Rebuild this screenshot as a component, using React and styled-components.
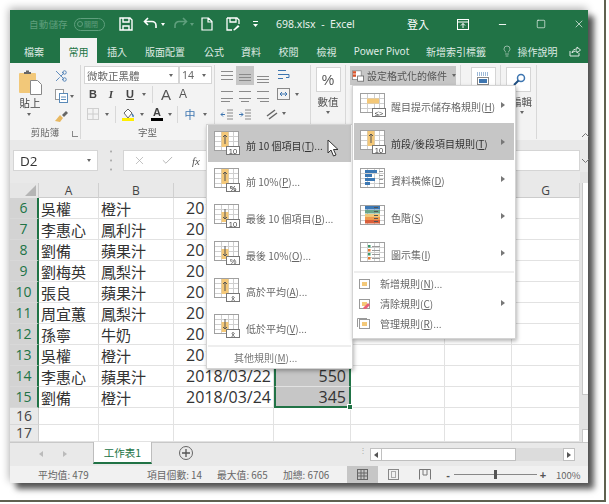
import React from "react";
import styled, { createGlobalStyle } from "styled-components";
import { Scissors, Lightbulb, X, Check, Minus, Square } from "lucide-react";

const GREEN = "#217346";
const HILITE = "#c6c6c6";
const CJK = `"Noto Sans CJK TC", "Noto Sans", sans-serif`;

const Global = createGlobalStyle`
  html, body { margin: 0; padding: 0; background: #fff; }
  * { box-sizing: border-box; }
  #root { width: 609px; height: 504px; overflow: hidden; font-family: ${CJK}; }
`;

const Frame = styled.div`
  width: 606px; height: 502px; padding: 10px 16px 16px 10px; background: #fff;
  border-right: 2px solid #5f6150; border-bottom: 2px solid #5f6150;
`;
const Win = styled.div`
  position: relative; width: 578px; height: 473px; display: flex; flex-direction: column;
  background: #f3f3f3; filter: blur(0.35px);
  box-shadow: 6px 6px 6px rgba(0,0,0,.65), -1px -2px 8px rgba(0,0,0,.3);
`;

/* title bar */
const TitleBar = styled.div`
  height: 28px; background: ${GREEN}; display: flex; align-items: center; color: #fff; font-size: 11px;
  padding-left: 19px; flex: none;
`;
const Slot = styled.div`
  flex: none; width: ${p => p.$w}px; margin-left: ${p => p.$ml || 0}px; display: flex; align-items: center;
  justify-content: center; gap: 2px; color: ${p => p.$c || "inherit"};
`;
const AutoSave = styled.span`color: #5f9f7d; font-size: 9.5px; letter-spacing: .2px; width: 45px;`;
const Toggle = styled.span`
  width: 31px; height: 13px; border: 1px solid #5f9f7d; border-radius: 7px; color: #5f9f7d; font-size: 7px;
  display: flex; align-items: center; gap: 1px; padding-left: 2px; margin-right: 8px; flex: none;
`;
const Knob = styled.i`width: 6px; height: 6px; border: 1px solid #5f9f7d; border-radius: 50%;`;
const TitleText = styled.span`width: 122px; margin-left: 15px; font-family: "Noto Sans", sans-serif; font-size: 10.5px; white-space: pre; flex: none; color: #e8f1ec;`;

/* tabs */
const TabRow = styled.div`height: 25px; background: ${GREEN}; display: flex; flex: none; color: #dfeae4; font-size: 10px;`;
const Tab = styled.div`
  flex: none; width: ${p => p.$w}px; margin-left: ${p => p.$ml || 0}px; display: flex; align-items: center; justify-content: center; gap: 5px;
  padding-top: 1px;
  background: ${p => p.$on ? "#f3f3f3" : "transparent"}; color: ${p => p.$on ? GREEN : "inherit"};
`;

/* ribbon */
const Ribbon = styled.div`height: 77px; flex: none; display: flex; background: #f3f3f3; position: relative; font-size: 10px; color: #555;`;
const Group = styled.div`
  flex: none; width: ${p => p.$w}px; padding: 1px 0 0 ${p => p.$pl || 0}px; height: 74px; margin-top: 2px; border-right: 1px solid #d8d8d8;
  display: flex; flex-direction: ${p => p.$row ? "row" : "column"}; align-items: ${p => p.$center ? "center" : "stretch"}; position: relative;
`;
const GroupLabel = styled.div`
  position: absolute; left: 0; right: 0; bottom: 0; text-align: center; font-size: 9.5px; color: #666; line-height: 13px;
`;
const Launcher = styled.span`position: absolute; right: 2px; bottom: 2px; width: 6px; height: 6px; border-left: 1px solid #888; border-bottom: 1px solid #888;`;
const PasteCol = styled.div`width: 42px; padding: 4px 0 0 8px; display: flex; flex-direction: column; align-items: flex-start; flex: none;`;
const PasteLabel = styled.span`font-size: 10.5px; color: #444; width: 24px; text-align: center; line-height: 12px; margin-top: 2px;`;
const ToolsCol = styled.div`display: flex; flex-direction: column;`;
const ToolRow = styled.div`display: flex; align-items: center; height: ${p => p.$h || 19}px; padding-left: ${p => p.$pl || 0}px; flex: none;`;
const Tool = styled.div`
  flex: none; width: ${p => p.$w || 18}px; height: ${p => p.$h || 19}px; margin-left: ${p => p.$ml || 0}px; display: flex; align-items: center; justify-content: center; gap: 3px;
  background: ${p => p.$on ? HILITE : "transparent"};
  font: ${p => p.$font || `bold 11px "Liberation Sans", sans-serif`}; color: ${p => p.$c || "#444"};
`;
const Caret = styled.i`
  flex: none; width: 0; height: 0; border-left: 2.5px solid transparent; border-right: 2.5px solid transparent; border-top: 3px solid #666;
`;
const Sep = styled.i`flex: none; width: 1px; height: 17px; background: #d8d8d8; margin: 0 ${p => p.$m || 4}px;`;
const Select = styled.div`
  flex: none; width: ${p => p.$w}px; height: 18px; background: #fff; border: 1px solid #d5d5d5; padding: 0 5px 0 2px; display: flex; align-items: center;
  justify-content: space-between; font-size: 10.5px; color: #666; margin-left: ${p => p.$ml || 0}px; white-space: nowrap;
`;
const BigBtn = styled.div`
  width: 25px; height: 25px; margin-top: 1px; border: 1px solid #d5d5d5; background: #fff; display: flex; align-items: center; justify-content: center; flex: none;
  font: 14px "Liberation Sans", sans-serif; color: #555;
`;
const BigLabel = styled.span`font-size: 10.5px; color: #555; margin-top: 3px; line-height: 14px;`;
const StylesBtn = styled.div`
  width: 106px; height: 19px; margin-left: 4px; background: ${HILITE}; display: flex; align-items: center; gap: 3px; padding-left: 2px; font-size: 10px; color: #555; white-space: nowrap;
`;
const Collapse = styled.div`position: absolute; right: -2px; bottom: 2px; color: #666; font-size: 0;`;

/* formula */
const FormulaBar = styled.div`height: 32px; flex: none; display: flex; padding: 10px 0 1px 3px; background: #e9e9e9; position: relative;`;
const NameBox = styled.div`
  width: 85px; height: 21px; background: #fff; border: 1px solid #d5d5d5; display: flex; align-items: center; justify-content: space-between;
  padding: 0 6px; font: 13.5px "Open Sans", sans-serif; color: #333; flex: none;
`;
const Dots = styled.div`
  width: 25px; flex: none; display: flex; align-items: center; justify-content: center; color: #aaa; font-size: 9px; line-height: 4px; writing-mode: vertical-rl;
`;
const FormulaInput = styled.div`flex: none; width: 457px; height: 21px; background: #fff; border: 1px solid #d5d5d5; display: flex; align-items: center; padding-left: 9px; gap: 15px; color: #aaa;`;
const Fx = styled.i`font: italic 11px "Liberation Serif", serif; color: #555; margin-left: 3px;`;

/* sheet */
const Sheet = styled.div`height: 270px; flex: none; display: flex; background: #e9e9e9;`;
const GridWrap = styled.div`width: 570px; padding-top: 11px; flex: none;`;
const Grid = styled.div`
  display: grid; grid-template-columns: 29px 60px 75px 100px 77px 94px 67px 68px;
  grid-template-rows: 15px repeat(10, 21px) 17px 17px; background: #fff;
  font: 16px "Open Sans", sans-serif; color: #333;
`;
const Corner = styled.div`
  background: #e6e6e6; border-right: 1px solid #ccc; position: relative; overflow: hidden;
  &::after { content: ""; position: absolute; right: 2px; bottom: 2px; border-left: 11px solid transparent; border-bottom: 11px solid #b5b5b5; }
`;
const ColHead = styled.div`
  background: ${p => p.$sel ? "#cfcfcf" : "#e9e9e9"}; border-right: 1px solid #d0d0d0; border-bottom: 1px solid #ccc; display: flex; align-items: center; justify-content: center;
  font-size: 12px; color: #444;
`;
const RowHead = styled.div`
  background: ${p => p.$sel ? "#d3d3d3" : "#e9e9e9"}; color: ${p => p.$sel ? GREEN : "#444"};
  border-right: ${p => p.$sel ? `2px solid ${GREEN}` : "1px solid #ccc"}; border-bottom: 1px solid #d8d8d8;
  display: flex; align-items: center; justify-content: center; font-size: 14px; line-height: 1;
`;
const Cell = styled.div`
  border-right: 1px solid #e2e2e2; border-bottom: 1px solid #e2e2e2; display: flex; align-items: center; overflow: hidden; white-space: nowrap; padding: 0 2px;
  justify-content: ${p => p.$right ? "flex-end" : "flex-start"};
  font-family: ${p => p.$cjk ? CJK : `"Open Sans", sans-serif`}; font-size: ${p => p.$cjk ? 15 : 16}px;
`;
const ValueCell = styled(Cell)`
  position: relative; background: ${HILITE}; overflow: visible; padding-right: 3px;
  border-left: 2px solid ${GREEN}; border-right: 2px solid ${GREEN}; border-bottom: ${p => p.$last ? `2px solid ${GREEN}` : "1px solid #e2e2e2"};
`;
const Handle = styled.i`position: absolute; right: -4px; bottom: -4px; width: 6px; height: 6px; background: ${GREEN}; border: 1px solid #fff; z-index: 1;`;
const VScroll = styled.div`
  flex: none; width: 8px; display: flex; flex-direction: column; padding-top: 11px; background: #e3e3e3; overflow: hidden;
`;
const VThumb = styled.div`height: 212px; background: #fff; border-left: 1px solid #c8c8c8; margin-left: 2px; flex: none; border-bottom: 1px solid #c8c8c8;`;
const VBtn = styled.div`height: 13px; margin-top: auto; background: #fff; border-left: 1px solid #c8c8c8; border-top: 1px solid #c8c8c8; margin-left: 2px;`;

/* sheet tabs */
const SheetTabs = styled.div`height: 24px; flex: none; display: flex; align-items: flex-start; background: #e9e9e9; padding-left: 19px; border-top: 1px solid #c8c8c8;`;
const Nav = styled.div`flex: none; width: 24px; height: 21px; display: flex; align-items: center; justify-content: center;`;
const Tri = styled.i`
  width: 0; height: 0; border-top: 3px solid transparent; border-bottom: 3px solid transparent;
  ${p => p.$left ? `border-right: 4px solid ${p.$c || "#bbb"};` : `border-left: 4px solid ${p.$c || "#bbb"};`}
`;
const SheetTab = styled.div`
  flex: none; width: 59px; height: 22px; margin-left: 16px; margin-top: -1px; background: #fff; color: ${GREEN}; font-size: 10.5px; display: flex; align-items: center; justify-content: center;
  border-left: 1px solid #bdbdbd; border-right: 1px solid #bdbdbd; border-bottom: 2px solid ${GREEN};
`;
const AddBtn = styled.div`
  flex: none; width: 14px; height: 14px; margin: 3px 0 0 27px; border: 1px solid #666; border-radius: 50%; color: #555; display: flex; align-items: center; justify-content: center;
`;
const SplitDots = styled.div`flex: none; margin: 5px 0 0 163px; width: 14px; height: 12px; color: #aaa; font-size: 8px; line-height: 4px; text-align: center;`;
const HScroll = styled.div`flex: none; width: 205px; height: 13px; margin-top: 5px; display: flex; background: #dcdcdc;`;
const HBtn = styled.div`flex: none; width: 12px; background: #fff; border: 1px solid #c0c0c0; display: flex; align-items: center; justify-content: center; margin-left: ${p => p.$auto ? "auto" : 0};`;
const HThumb = styled.div`flex: none; width: 134px; background: #fff; border: 1px solid #c0c0c0; border-left: 0;`;

/* status */
const Status = styled.div`height: 17px; flex: none; display: flex; align-items: center; background: #f1f1f1; color: #666; font-size: 9.8px; padding-left: 28px; white-space: nowrap;`;
const Stat = styled.span`flex: none; width: ${p => p.$w}px;`;
const ViewBtn = styled.div`flex: none; width: ${p => p.$w || 31}px; height: 17px; display: flex; align-items: center; justify-content: center; background: ${p => p.$on ? HILITE : "transparent"};`;
const Slider = styled.div`flex: none; width: 83px; height: 1px; background: #888; position: relative;`;
const SliderKnob = styled.i`position: absolute; left: 40px; top: -4px; width: 3px; height: 9px; background: #555;`;
const Percent = styled.span`margin-left: 7px; font-size: 9.5px;`;
const Sign = styled.span`flex: none; width: ${p => p.$w}px; margin-left: ${p => p.$ml || 0}px; text-align: center; font: bold 11px "Liberation Sans", sans-serif; color: #555;`;

/* menus */
const Menu = styled.div`
  position: absolute; left: ${p => p.$x}px; top: ${p => p.$y}px; width: ${p => p.$w}px; height: ${p => p.$h}px; background: #fff;
  border: 1px solid #d4d4d4; box-shadow: 1px 2px 4px rgba(0,0,0,.3); padding: 0 1px; z-index: 5; display: flex; flex-direction: column;
  font-size: 10px; color: #666;
`;
const MenuIconBox = styled.span`flex: none; width: ${p => p.$w || 32}px; display: flex; align-items: center;`;
const MenuItem = styled.div`
  height: ${p => p.$h || 37}px; flex: none; display: flex; align-items: center; position: relative; white-space: nowrap;
  background: ${p => p.$on ? HILITE : "transparent"}; color: ${p => p.$on ? "#333" : "#666"};
  padding-left: ${p => p.$pl || 6}px; padding-top: ${p => p.$small ? 0 : 4}px;
  & > ${MenuIconBox} { margin-top: ${p => p.$small ? 0 : -4}px; }
`;
const Sub = styled.span`
  position: absolute; right: 9px; top: 50%; margin-top: -3px; width: 0; height: 0;
  border-top: 3px solid transparent; border-bottom: 3px solid transparent; border-left: 4px solid #777;
`;
const MenuSep = styled.div`height: 2px; background: #eee; flex: none;`;
const More = styled.div`height: 22px; display: flex; align-items: center; padding-left: 26px; flex: none; color: #777;`;
const Cursor = styled.svg`position: absolute; left: 119px; top: 14px;`;
const Key = styled.u``;

/* icon drawings */
const Ic = ({ w = 16, h = 16, vb, children }) => <svg width={w} height={h} viewBox={vb || `0 0 ${w} ${h}`} fill="none">{children}</svg>;

const Lines = ({ kind }) => {
  const rows = { t: [2, 6, 10], m: [5, 8, 11], b: [7, 10, 13] }[kind[0]] || [3, 6.5, 10, 13];
  const a = kind[1];
  return <Ic w={14} h={14}>{rows.map((y, i) => {
    const odd = i % 2 === 1;
    const x1 = a === "c" && odd ? 3 : a === "r" && odd ? 4 : 1;
    const x2 = a === "l" && odd ? 10 : a === "c" && odd ? 11 : 13;
    return <path key={y} d={`M${x1} ${y}.5H${x2}`} stroke="#8a8a8a" />;
  })}</Ic>;
};

const TableBase = ({ children, c = "#a0a0a0" }) => (
  <>
    <rect x=".5" y=".5" width="24" height="19" fill="#fff" stroke={c} />
    {[5, 10, 15].map(y => <path key={y} d={`M1 ${y}.5H24`} stroke="#cfcfcf" />)}
    {[7, 14, 19].map(x => <path key={x} d={`M${x}.5 1V19`} stroke="#cfcfcf" />)}
    {children}
  </>
);
const Badge = ({ children, small }) => (
  <g>
    <rect x="12.5" y="15.5" width="13" height="8" fill="#fff" stroke="#777" />
    <text x="19" y="22.500" textAnchor="middle" fontSize="7.500" fontFamily="Liberation Sans, sans-serif" fontWeight={small ? "bold" : "normal"} fill="#444">{children}</text>
  </g>
);
const Up = () => <><rect x="7.500" y="1" width="7" height="15" fill="#f4c878" /><path d="M11 13V4M9 6l2-2 2 2" stroke="#555" /></>;
const Down = () => <><rect x="7.500" y="8" width="7" height="10" fill="#f4c878" /><path d="M11 5v10M9 13l2 2 2-2" stroke="#555" /></>;
const RuleIcon = ({ dir, badge, small }) => (
  <Ic w={26} h={24}>
    <TableBase>{dir === "u" ? <Up /> : dir === "d" ? <Down /> : <rect x="7" y="5.500" width="12" height="5" fill="#f4c878" />}</TableBase>
    <Badge small={small}>{badge}</Badge>
  </Ic>
);
const BarsIcon = () => (
  <Ic w={26} h={22}>
    <TableBase />
    {[[2, 12], [6, 7], [10, 10], [14, 5]].map(([y, w]) => <rect key={y} x="5" y={y} width={w} height="3" fill="#3c78b4" />)}
    {[3, 7, 11, 15].map(y => <path key={y} d={`M19 ${y}.5H23`} stroke="#999" />)}
  </Ic>
);
const ScaleIcon = () => (
  <Ic w={26} h={22}>
    <TableBase />
    {[["#3c78b4", 1], ["#6aa58a", 5], ["#f0c878", 9], ["#ee9a4d", 12], ["#d95f3a", 15]].map(([c, y]) => <rect key={c} x="5" y={y} width="15" height="3.5" fill={c} />)}
    {[2, 6, 10, 13, 16].map(y => <path key={y} d={`M14 ${y}.5H18`} stroke="#555" />)}
  </Ic>
);
const SetIcon = () => (
  <Ic w={26} h={22}>
    <TableBase />
    {[[3, "#3b9a6b"], [7, "#e8792f"], [11, "#3b9a6b"], [15, "#e8792f"]].map(([y, c]) => <rect key={y} x="8" y={y} width="2.5" height="2.5" fill={c} />)}
    {[4, 8, 12, 16].map(y => <path key={y} d={`M12 ${y}.5H20`} stroke="#999" />)}
  </Ic>
);
const SmallTable = ({ erase, stack }) => (
  <Ic w={14} h={13}>
    {stack && <path d="M.5 10V1.5H10" stroke="#999" />}
    <rect x="2.5" y="2.5" width="10" height="9" fill="#fff" stroke="#999" />
    <rect x="5" y="5" width="5" height="4" fill="#f4c878" />
    {erase && <path d="M6 11l5-5 2 2-4 4H7z" fill="#e8607a" />}
  </Ic>
);
const XBar = "x̄";

const people = [
  ["吳權", "橙汁", "2018/03/03", 423], ["李惠心", "鳳利汁", "2018/03/05", 665], ["劉備", "蘋果汁", "2018/03/08", 390], ["劉梅英", "鳳梨汁", "2018/03/10", 512],
  ["張良", "蘋果汁", "2018/03/12", 468], ["周宜蕙", "鳳梨汁", "2018/03/15", 377], ["孫寧", "牛奶", "2018/03/17", 601], ["吳權", "橙汁", "2018/03/20", 436],
  ["李惠心", "蘋果汁", "2018/03/22", 550], ["劉備", "橙汁", "2018/03/24", 345],
];

export default function App() {
  return (
    <Frame>
      <Global />
      <Win>
        <TitleBar>
          <AutoSave>自動儲存</AutoSave>
          <Toggle><Knob />關閉</Toggle>
          <Slot $w={26}><Ic w={14} h={14}><path d="M1 1h10l2 2v10H1z M4 1v4h6V1 M4 13V9h6v4" stroke="#fff" strokeWidth="1.4" /></Ic></Slot>
          <Slot $w={30}><Ic w={16} h={14}><path d="M5 1L1.5 4.5 5 8M2 4.5h7a4 4 0 0 1 4 4v2.5" stroke="#fff" strokeWidth="1.6" /></Ic><Caret style={{ borderTopColor: "#fff" }} /></Slot>
          <Slot $w={28}><Ic w={16} h={14}><path d="M11 1l3.5 3.5L11 8M14 4.5H7a4 4 0 0 0-4 4v2.5" stroke="#5f9f7d" strokeWidth="1.6" /></Ic><Caret style={{ borderTopColor: "#5f9f7d" }} /></Slot>
          <Slot $w={20}><Ic w={12} h={14}><path d="M1 1h6.5L11 4.5V13H1zM7 1v4h4" stroke="#fff" strokeWidth="1.2" /></Ic></Slot>
          <Slot $w={32}><Ic w={14} h={14}><path d="M1 1h10l2 2v4M6 13H1V1M4 1v4h6V1" stroke="#fff" strokeWidth="1.3" /><path d="M7 13l5-5 1.5 1.5-5 4z" fill="#fff" /></Ic></Slot>
          <Slot $w={12}><Ic w={7} h={8}><path d="M1 1.5h5" stroke="#fff" /><path d="M1 4l2.5 3L6 4z" fill="#fff" /></Ic></Slot>
          <TitleText>698.xlsx  -  Excel</TitleText>
          <Slot $w={40}>登入</Slot>
          <Slot $w={38} $ml={6}><Ic w={12} h={11}><rect x=".5" y=".5" width="11" height="10" stroke="#fff" /><path d="M.5 3h11M6 9V4.5M4 6.5l2-2 2 2" stroke="#fff" /></Ic></Slot>
          <Slot $w={40}><Minus size={11} color="#fff" /></Slot>
          <Slot $w={38}><Square size={10} color="#fff" strokeWidth={1.5} /></Slot>
          <Slot $w={18} $ml={10}><X size={12} color="#fff" strokeWidth={1.3} /></Slot>
        </TitleBar>
        <TabRow>
          <Tab $w={48}>檔案</Tab>
          <Tab $w={37} $ml={2} $on>常用</Tab>
          <Tab $w={40}>插入</Tab>
          <Tab $w={56}>版面配置</Tab>
          <Tab $w={42}>公式</Tab>
          <Tab $w={32}>資料</Tab>
          <Tab $w={43}>校閱</Tab>
          <Tab $w={33}>檢視</Tab>
          <Tab $w={77} style={{ fontFamily: '"Noto Sans", sans-serif' }}>Power Pivot</Tab>
          <Tab $w={72}>新增索引標籤</Tab>
          <Tab $w={74}><Lightbulb size={12} strokeWidth={1.2} />操作說明</Tab>
          <Tab $w={18}><Ic w={12} h={11}><path d="M1 5v5h9V7M3 7c0-3 3-4 5-4V1l3.500 3L8 7V5C6 5 4 5.500 3 7z" stroke="#dfeae4" /></Ic></Tab>
        </TabRow>
        <Ribbon>
          <Group $w={71} $row>
            <PasteCol>
              <Ic w={26} h={25}>
                <rect x="1" y="3" width="17" height="20" rx="1" fill="#f2c879" />
                <path d="M6 4V2h2V.5h3V2h2v2z" fill="#666" />
                <path d="M12.500 10.500h7l4 4v10h-11z" fill="#fff" stroke="#888" />
              </Ic>
              <PasteLabel>貼上</PasteLabel>
              <Caret style={{ margin: "4px 0 0 9px" }} />
            </PasteCol>
            <ToolsCol>
              <Tool $w={18} $h={20}><Scissors size={14} color="#3d75b0" strokeWidth={1.4} style={{ transform: "scaleX(-1)" }} /></Tool>
              <ToolRow $h={20}>
                <Tool $w={18}><Ic w={13} h={14}><rect x=".5" y=".5" width="8" height="10" fill="#fff" stroke="#999" /><rect x="4.500" y="4.500" width="8" height="9" fill="#fff" stroke="#5a8ab8" /><path d="M6 8h5M6 10.500h5" stroke="#5a8ab8" /></Ic></Tool>
                <Caret />
              </ToolRow>
              <Tool $w={18} $h={20}><Ic w={14} h={14}><path d="M1 12l5-6 3 3-3 4z" fill="#e8b860" /><path d="M8 6l4-4 2 2-4 4z" fill="#666" /></Ic></Tool>
            </ToolsCol>
            <GroupLabel>剪貼簿</GroupLabel>
            <Launcher />
          </Group>
          <Group $w={134} $pl={3}>
            <ToolRow $h={18}>
              <Select $w={95}>微軟正黑體<Caret /></Select>
              <Select $w={33}><span style={{ fontFamily: '"Noto Sans"' }}>14</span><Caret /></Select>
            </ToolRow>
            <ToolRow $h={20}>
              <Tool>B</Tool>
              <Tool $font={`italic bold 11px "Liberation Serif", serif`}>I</Tool>
              <Tool $w={20} style={{ textDecoration: "underline" }}>U</Tool>
              <Tool $w={8}><Caret /></Tool>
              <Sep $m={4} />
              <Tool $font={`15px "Liberation Sans", sans-serif`} $c="#555">A</Tool>
              <Tool $w={16} $font={`12px "Liberation Sans", sans-serif`} $c="#555">A</Tool>
            </ToolRow>
            <ToolRow $h={20}>
              <Tool><Ic w={12} h={12}><rect x=".5" y=".5" width="11" height="11" stroke="#aaa" strokeDasharray="1 1" /><path d="M6 1v10M1 6h10" stroke="#ccc" /></Ic></Tool>
              <Tool $w={10}><Caret /></Tool>
              <Sep $m={3} />
              <Tool><Ic w={14} h={14}><path d="M3 6l4-4 4 4-4 5z" stroke="#666" fill="#fff" /><path d="M11 7c1 1 1.500 2 1 3" stroke="#3d75b0" strokeWidth="1.500" /><rect x="1" y="11" width="12" height="3" fill="#ffef00" /></Ic></Tool>
              <Tool $w={10}><Caret /></Tool>
              <Tool $ml={1} $font={`bold 11px "Liberation Sans", sans-serif`} style={{ flexDirection: "column", gap: 0 }}><span style={{ lineHeight: "11px" }}>A</span><i style={{ width: 12, height: 3, background: "#000" }} /></Tool>
              <Tool $w={8}><Caret /></Tool>
              <Sep $m={3} />
              <Tool $font={`11px ${CJK}`} $c="#3d75b0">中</Tool>
              <Tool $w={12}><Caret /></Tool>
            </ToolRow>
            <GroupLabel>字型</GroupLabel>
          </Group>
          <Group $w={96} $pl={3}>
            <ToolRow $h={19}>
              <Tool><Lines kind="t" /></Tool><Tool $on><Lines kind="m" /></Tool><Tool><Lines kind="b" /></Tool>
              <Tool $ml={3}><Ic w={14} h={13}><path d="M1 1.500h8M1 5.500h11v3H9M1 9.500h5" stroke="#3d75b0" /></Ic></Tool>
            </ToolRow>
            <ToolRow>
              <Tool><Lines kind="xl" /></Tool><Tool><Lines kind="xc" /></Tool><Tool><Lines kind="xr" /></Tool>
              <Tool $ml={3}><Ic w={14} h={13}><rect x=".5" y=".5" width="12" height="11" stroke="#888" /><path d="M3 6h7M3 6l2-2M3 6l2 2M10 6L8 4M10 6L8 8" stroke="#3d75b0" /></Ic></Tool>
              <Tool $w={8}><Caret /></Tool>
            </ToolRow>
            <ToolRow>
              <Tool><Ic w={14} h={12}><path d="M7 2h6M7 5h6M7 8h6M7 11h6" stroke="#888" /><path d="M1 6.500h4M1 6.500l2-2M1 6.500l2 2" stroke="#3d75b0" /></Ic></Tool>
              <Tool><Ic w={14} h={12}><path d="M7 2h6M7 5h6M7 8h6M7 11h6" stroke="#888" /><path d="M5 6.500H1M5 6.500l-2-2M5 6.500l-2 2" stroke="#3d75b0" /></Ic></Tool>
              <Tool $ml={9}><Ic w={14} h={14}><path d="M2 9l8-6M4 12l8-6" stroke="#666" strokeWidth="1.500" /></Ic></Tool>
              <Tool $w={6}><Caret /></Tool>
            </ToolRow>
          </Group>
          <Group $w={35} $center>
            <BigBtn>%</BigBtn>
            <BigLabel>數值</BigLabel>
            <Caret style={{ marginTop: 2 }} />
          </Group>
          <Group $w={115}>
            <StylesBtn>
              <Ic w={15} h={14}><rect x=".5" y=".5" width="11" height="11" fill="#fff" stroke="#888" /><rect x="1" y="1" width="4" height="3" fill="#d9542b" /><rect x="1" y="5" width="4" height="3" fill="#d9542b" /><rect x="7" y="7" width="7.500" height="6.500" fill="#fff" stroke="#666" /></Ic>
              設定格式化的條件
              <Caret style={{ marginLeft: 2 }} />
            </StylesBtn>
          </Group>
          <Group $w={40} $center>
            <BigBtn style={{ marginLeft: 5 }}><Ic w={14} h={15}><path d="M1 1h12M1 3h12" stroke="#3d75b0" strokeDasharray="1 1" /><rect x="1.500" y="5.500" width="11" height="7" stroke="#888" /><rect x="3" y="7" width="8" height="4" fill="#3d75b0" /></Ic></BigBtn>
          </Group>
          <Group $w={36} $center>
            <BigBtn><Ic w={14} h={14}><circle cx="9" cy="5" r="3.500" stroke="#3d75b0" strokeWidth="1.500" /><path d="M6.500 7.500L2 12" stroke="#1f4e80" strokeWidth="2" /></Ic></BigBtn>
            <BigLabel style={{ marginLeft: 6 }}>編輯</BigLabel>
            <Caret style={{ marginTop: 2, marginLeft: 6 }} />
          </Group>
          <Collapse><Ic w={9} h={6}><path d="M1 5l3.500-3.500L8 5" stroke="#777" /></Ic></Collapse>
        </Ribbon>
        <FormulaBar>
          <NameBox>D2<Caret /></NameBox>
          <Dots>···</Dots>
          <FormulaInput>
            <X size={13} strokeWidth={1.3} /><Check size={13} strokeWidth={1.6} /><Fx>fx</Fx>
          </FormulaInput>
          <Collapse style={{ bottom: 8 }}><Ic w={9} h={6}><path d="M1 1l3.500 3.500L8 1" stroke="#777" /></Ic></Collapse>
        </FormulaBar>
        <Sheet>
          <GridWrap>
            <Grid>
              <Corner />
              {["A", "B", "C", "D", "E", "F", "G"].map(c => <ColHead key={c} $sel={c === "D"}>{c}</ColHead>)}
              {people.map(([n, d, t, v], i) => (
                <React.Fragment key={i}>
                  <RowHead $sel>{i + 6}</RowHead>
                  <Cell $cjk>{n}</Cell>
                  <Cell $cjk>{d}</Cell>
                  <Cell $right>{t}</Cell>
                  <ValueCell $right $last={i === 9}>{v}{i === 9 && <Handle />}</ValueCell>
                  <Cell /><Cell /><Cell />
                </React.Fragment>
              ))}
              {[16, 17].map(r => (
                <React.Fragment key={r}>
                  <RowHead>{r}</RowHead>
                  <Cell /><Cell /><Cell /><Cell /><Cell /><Cell /><Cell />
                </React.Fragment>
              ))}
            </Grid>
          </GridWrap>
          <VScroll><VThumb /><VBtn /></VScroll>
        </Sheet>
        <SheetTabs>
          <Nav><Tri $left /></Nav>
          <Nav><Tri /></Nav>
          <SheetTab>工作表1</SheetTab>
          <AddBtn><Ic w={8} h={8}><path d="M4 0v8M0 4h8" stroke="#555" strokeWidth="1.3" /></Ic></AddBtn>
          <SplitDots>⋮</SplitDots>
          <HScroll>
            <HBtn><Tri $left $c="#555" /></HBtn>
            <HThumb />
            <HBtn $auto><Tri $c="#555" /></HBtn>
          </HScroll>
        </SheetTabs>
        <Status>
          <Stat $w={109}>平均值: 479</Stat>
          <Stat $w={70}>項目個數: 14</Stat>
          <Stat $w={66}>最大值: 665</Stat>
          <Stat $w={64}>加總: 6706</Stat>
          <ViewBtn $on><Ic w={11} h={11}><rect x=".5" y=".5" width="10" height="10" stroke="#666" /><path d="M4 1v9M7 1v9M1 4h9M1 7h9" stroke="#666" /></Ic></ViewBtn>
          <ViewBtn><Ic w={11} h={11}><rect x=".5" y=".5" width="10" height="10" stroke="#888" /><rect x="3.500" y="2.500" width="4" height="6" stroke="#aaa" /></Ic></ViewBtn>
          <ViewBtn><Ic w={12} h={11}><path d="M.5 10.500V.5h11v10M4 1v5h4V1" stroke="#777" /></Ic></ViewBtn>
          <Sign $w={12} $ml={2}>-</Sign>
          <Slider><SliderKnob /></Slider>
          <Sign $w={12}>+</Sign>
          <Percent>100%</Percent>
        </Status>

        <Menu $x={196} $y={114} $w={147} $h={245}>
          <MenuItem $h={36.6} $on><MenuIconBox><RuleIcon dir="u" badge="10" /></MenuIconBox>前 10 個項目(<Key>T</Key>)...
            <Cursor width="12" height="18" viewBox="0 0 12 18"><path d="M1 1v13l3-3 2.500 6 2.500-1-2.500-5.500H11z" fill="#fff" stroke="#333" /></Cursor>
          </MenuItem>
          <MenuItem $h={36.6}><MenuIconBox><RuleIcon dir="u" badge="%" small /></MenuIconBox>前 10%(<Key>P</Key>)...</MenuItem>
          <MenuItem $h={36.6}><MenuIconBox><RuleIcon dir="d" badge="10" /></MenuIconBox>最後 10 個項目(<Key>B</Key>)...</MenuItem>
          <MenuItem $h={36.6}><MenuIconBox><RuleIcon dir="d" badge="%" /></MenuIconBox>最後 10%(<Key>O</Key>)...</MenuItem>
          <MenuItem $h={36.6}><MenuIconBox><RuleIcon dir="u" badge={XBar} /></MenuIconBox>高於平均(<Key>A</Key>)...</MenuItem>
          <MenuItem $h={36.6}><MenuIconBox><RuleIcon dir="d" badge={XBar} /></MenuIconBox>低於平均(<Key>V</Key>)...</MenuItem>
          <MenuSep />
          <More>其他規則(<Key>M</Key>)...</More>
        </Menu>

        <Menu $x={342} $y={75} $w={164} $h={254}>
          <MenuItem><MenuIconBox $w={31}><RuleIcon badge="≤>" /></MenuIconBox>醒目提示儲存格規則(<Key>H</Key>)<Sub /></MenuItem>
          <MenuItem $on><MenuIconBox $w={31}><RuleIcon dir="u" badge="10" /></MenuIconBox>前段/後段項目規則(<Key>T</Key>)<Sub /></MenuItem>
          <MenuItem><MenuIconBox $w={31}><BarsIcon /></MenuIconBox>資料橫條(<Key>D</Key>)<Sub /></MenuItem>
          <MenuItem><MenuIconBox $w={31}><ScaleIcon /></MenuIconBox>色階(<Key>S</Key>)<Sub /></MenuItem>
          <MenuItem><MenuIconBox $w={31}><SetIcon /></MenuIconBox>圖示集(<Key>I</Key>)<Sub /></MenuItem>
          <MenuSep />
          <MenuItem $small $h={20} $pl={3}><MenuIconBox $w={23}><SmallTable /></MenuIconBox>新增規則(<Key>N</Key>)...</MenuItem>
          <MenuItem $small $h={20} $pl={3}><MenuIconBox $w={23}><SmallTable erase /></MenuIconBox>清除規則(<Key>C</Key>)<Sub /></MenuItem>
          <MenuItem $small $h={20} $pl={3}><MenuIconBox $w={23}><SmallTable stack /></MenuIconBox>管理規則(<Key>R</Key>)...</MenuItem>
        </Menu>
      </Win>
    </Frame>
  );
}
